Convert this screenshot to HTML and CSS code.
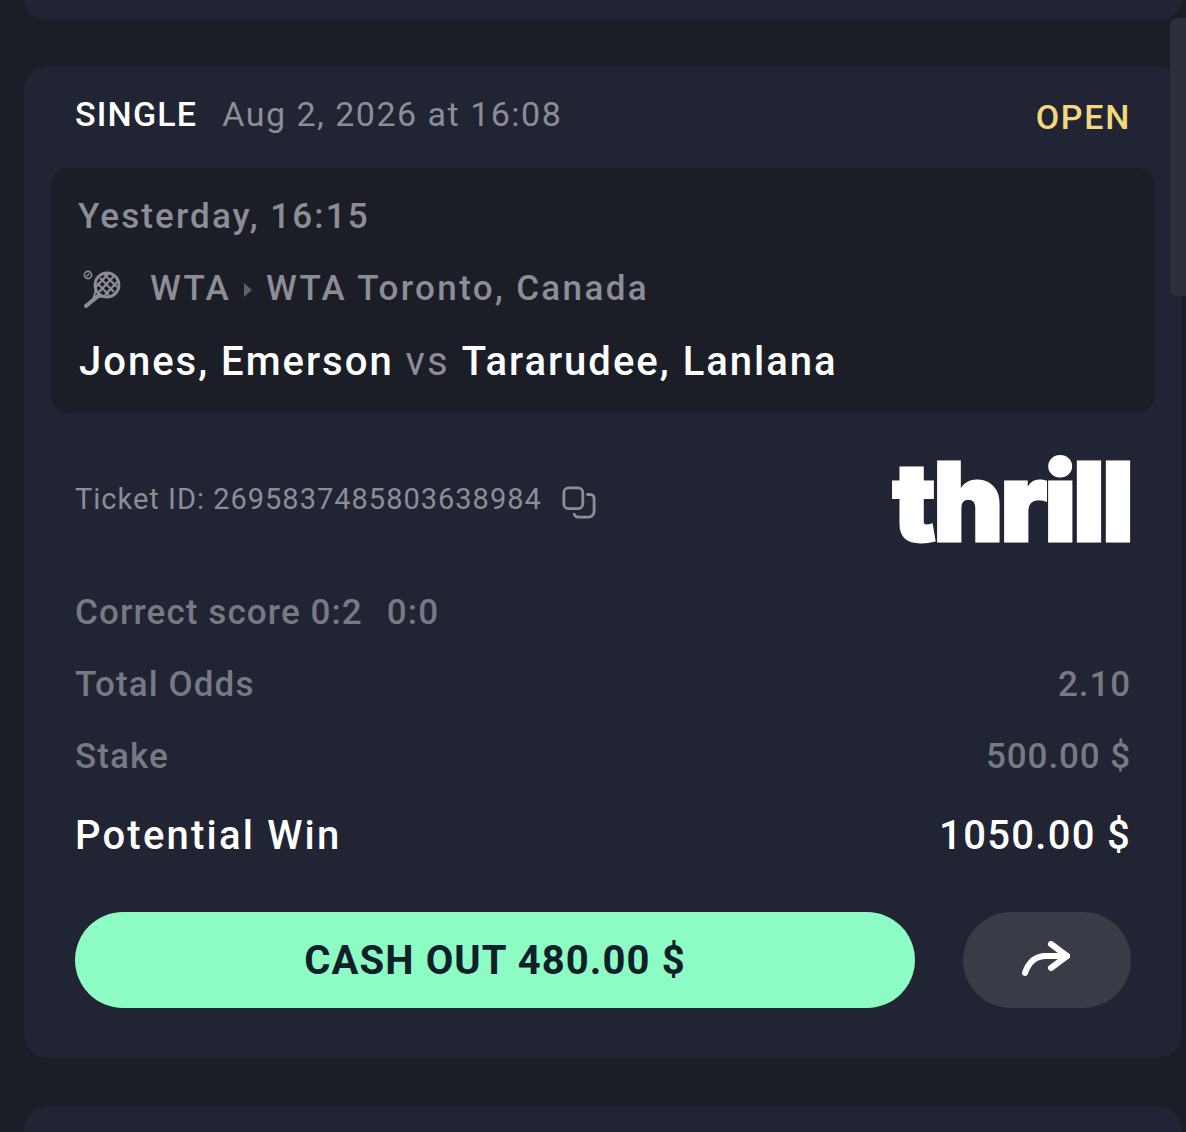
FILE: index.html
```html
<!DOCTYPE html>
<html lang="en">
  <head>
    <meta charset="UTF-8" />
    <meta name="viewport" content="width=device-width, initial-scale=1.0" />
    <title>My Bets</title>
    <link rel="stylesheet" href="styles.css">
  </head>
  <body>
    <div class="bet-card bet-card-prev"></div>

    <section class="bet-card">
      <div class="bet-head">
        <div class="bet-head-left">
          <span class="bet-type">SINGLE</span>
          <span class="bet-date">Aug 2, 2026 at 16:08</span>
        </div>
        <span class="bet-status">OPEN</span>
      </div>

      <div class="event-panel">
        <div class="event-time">Yesterday, 16:15</div>
        <div class="event-league">
          <svg class="sport-icon" viewBox="0 0 40 40" fill="none">
            <circle cx="6" cy="6" r="3.6" stroke="#8c8d96" stroke-width="1.6" />
            <path d="M4.5 7.5l3-3" stroke="#8c8d96" stroke-width="1.3" />
            <path d="M18 9l14 14M15 14l12 12M22 5l13 13M32 7L17 23M36 12L23 26M27 4L14 18" stroke="#8c8d96" stroke-width="2.2" />
            <circle cx="25" cy="16" r="12" stroke="#8c8d96" stroke-width="2.8" />
            <path d="M16 27L4 37" stroke="#8c8d96" stroke-width="4" stroke-linecap="round" />
            <path d="M14 18c0 4-1 7-3 12M11 29c5-1 8-1 12-2" stroke="#8c8d96" stroke-width="2" />
          </svg>
          <span>WTA</span>
          <svg class="crumb-arrow" viewBox="0 0 8 14"><path d="M0 0l8 7-8 7z" fill="#5d5f6a" /></svg>
          <span>WTA Toronto, Canada</span>
        </div>
        <div class="event-teams">Jones, Emerson <span class="vs">vs</span> Tararudee, Lanlana</div>
      </div>

      <div class="ticket-row">
        <div class="ticket-id">
          <span>Ticket ID: 2695837485803638984</span>
          <svg class="copy-icon" viewBox="0 0 36 36" fill="none" stroke="#8c8d96" stroke-width="3" stroke-linecap="round">
            <rect x="2" y="2" width="20" height="22" rx="5" />
            <path d="M27 9h3a4 4 0 0 1 4 4v14a6 6 0 0 1-6 6H17a5 5 0 0 1-4-3" />
          </svg>
        </div>
        <div class="brand-logo">thrill</div>
      </div>

      <div class="bet-lines">
        <div class="bet-line"><span>Correct score 0:2<span class="score-now">0:0</span></span></div>
        <div class="bet-line"><span>Total Odds</span><span class="line-value">2.10</span></div>
        <div class="bet-line"><span>Stake</span><span class="line-value">500.00 $</span></div>
        <div class="bet-line bet-line-win"><span class="win-label">Potential Win</span><span class="line-value">1050.00 $</span></div>
      </div>

      <div class="bet-actions">
        <button class="btn-cashout">CASH OUT 480.00 $</button>
        <button class="btn-share">
          <svg viewBox="0 0 48 36" fill="none" stroke="#fff" stroke-width="6" stroke-linecap="round" stroke-linejoin="round">
            <path d="M3 32c3-9 9-17 21-17h21" />
            <path d="M29 3l16 12-16 12" />
          </svg>
        </button>
      </div>
    </section>

    <div class="bet-card bet-card-next"></div>

    <div class="scroll-thumb"></div>
  </body>
</html>
```

FILE: styles.css
```css
/* General */
html,
body {
  height: 1132px;
  overflow: hidden;
}

body {
  margin: 0;
  padding: 0 4px 0 24px;
  box-sizing: border-box;
  background-color: #1b1d27;
  font-family: "Roboto", sans-serif;
  color: #fff;
}

.bet-card {
  background: #212433;
  border-radius: 24px;
  padding: 0 51px 0 51px;
  height: 992px;
  box-sizing: border-box;
  margin-bottom: 48px;
}

.bet-card-prev {
  height: 19px;
  border-radius: 0 0 24px 24px;
  margin-bottom: 47px;
}

.bet-card-next {
  height: 60px;
  margin-bottom: 0;
}

/* Header */
.bet-head {
  display: flex;
  justify-content: space-between;
  height: 102px;
  padding-top: 28px;
  box-sizing: border-box;
}

.bet-type {
  font-size: 34px;
  font-weight: 500;
  letter-spacing: 1.2px;
  margin-right: 21px;
}

.bet-date {
  font-size: 34px;
  color: #8c8d96;
  letter-spacing: 1.5px;
}

.bet-status {
  font-size: 34px;
  font-weight: 500;
  color: #f5d77f;
  letter-spacing: 1.7px;
  padding-top: 3px;
}

/* Event panel */
.event-panel {
  background: #1b1d27;
  border-radius: 18px;
  margin: 0 -24px;
  padding: 28px 27px 0;
  height: 245px;
  box-sizing: border-box;
}

.event-time {
  font-size: 35px;
  font-weight: 500;
  color: #8c8d96;
  letter-spacing: 2.1px;
  line-height: 42px;
}

.event-league {
  display: flex;
  align-items: center;
  margin-top: 30px;
  font-size: 35px;
  font-weight: 500;
  color: #8c8d96;
  letter-spacing: 2.35px;
  line-height: 42px;
}

.sport-icon {
  width: 40px;
  height: 40px;
  margin: 0 28px 0 4px;
}

.crumb-arrow {
  width: 8px;
  height: 14px;
  margin: 2px 14px 0 13px;
}

.event-teams {
  margin-top: 28px;
  margin-left: 1px;
  font-size: 40px;
  font-weight: 500;
  letter-spacing: 2px;
  line-height: 48px;
}

.vs {
  color: #8c8d96;
  font-weight: 400;
  margin-right: 1px;
}

/* Ticket */
.ticket-row {
  display: flex;
  justify-content: space-between;
  align-items: center;
  height: 130px;
  margin-top: 24px;
}

.ticket-id {
  display: flex;
  align-items: center;
  font-size: 29px;
  color: #8c8d96;
  letter-spacing: 1px;
  margin-bottom: 6px;
}

.copy-icon {
  width: 34px;
  height: 34px;
  margin-left: 20px;
  margin-top: 8px;
}

.brand-logo {
  font-family: "Inter", sans-serif;
  font-weight: 900;
  font-size: 108px;
  line-height: 100px;
  letter-spacing: -3px;
  -webkit-text-stroke: 3px #fff;
}

/* Bet lines */
.bet-lines {
  margin-top: 9px;
}

.bet-line {
  display: flex;
  justify-content: space-between;
  font-size: 35px;
  font-weight: 500;
  color: #777983;
  letter-spacing: 1.1px;
  height: 72px;
  align-items: center;
}

.score-now {
  margin-left: 24px;
}

.line-value {
  letter-spacing: 0.9px;
}

.bet-line-win {
  color: #fff;
  font-size: 40px;
  height: 86px;
}

.win-label {
  letter-spacing: 2.2px;
}

.bet-line-win .line-value {
  color: #fff;
  letter-spacing: 1.3px;
}

/* Buttons */
.bet-actions {
  display: flex;
  justify-content: space-between;
  margin-top: 34px;
}

.btn-cashout {
  width: 840px;
  height: 96px;
  border: none;
  border-radius: 48px;
  background-color: #8cfcc4;
  color: #10202a;
  font-family: "Roboto", sans-serif;
  font-size: 40px;
  font-weight: 700;
  letter-spacing: 1.1px;
}

.btn-share {
  width: 168px;
  height: 96px;
  border: none;
  border-radius: 48px;
  background-color: #393b47;
  padding: 0 2px 0 0;
  display: flex;
  align-items: center;
  justify-content: center;
}

.btn-share svg {
  width: 48px;
  height: 36px;
  margin-bottom: 2px;
}

.scroll-thumb {
  position: absolute;
  top: 18px;
  left: 1170px;
  width: 16px;
  height: 278px;
  border-radius: 8px 0 0 8px;
  background: #2d303c;
}
```
